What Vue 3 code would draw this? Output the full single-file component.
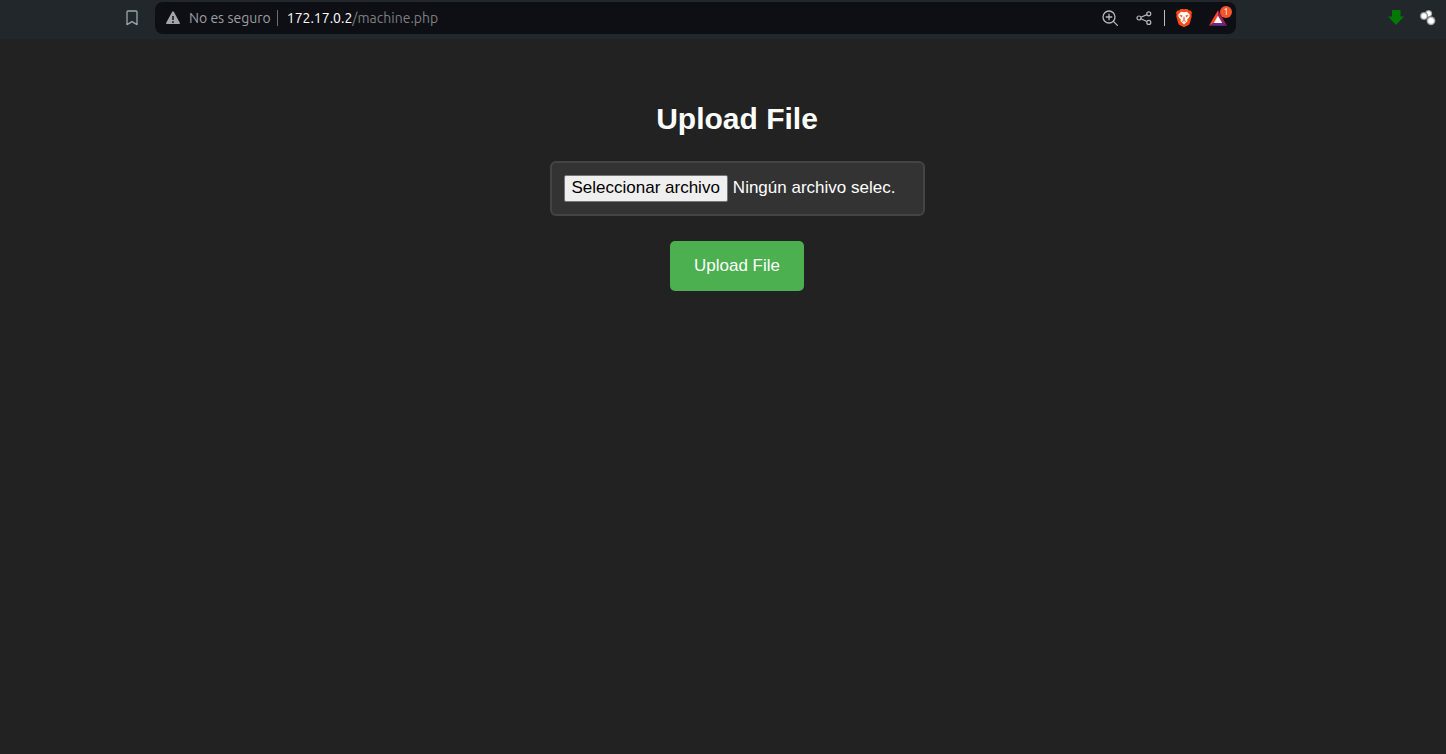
<script setup>
import { ref } from 'vue'

const fileName = ref('Ningún archivo selec.')

function onFile(event) {
  const file = event.target.files[0]
  fileName.value = file ? file.name : 'Ningún archivo selec.'
}
</script>

<template>
  <div class="window">
    <header class="toolbar">
      <button class="icon-btn bookmark" type="button" aria-label="Bookmark">
        <svg width="18" height="18" viewBox="0 0 18 18" fill="none" stroke="#9aa7ad" stroke-width="1.3" stroke-linejoin="round">
          <path d="M5 2h8q1 0 1 1v12.6L9 12.6 4 15.6V3q0-1 1-1Z" />
        </svg>
      </button>
      <div class="address">
        <button class="security" type="button">
          <svg width="16" height="16" viewBox="0 0 16 16">
            <path d="M8 2.2 14 13.2H2Z" fill="#a3a6aa" stroke="#a3a6aa" stroke-width="1.8" stroke-linejoin="round" />
            <path d="M8 6v4M8 11.3v1.6" stroke="#0e0f14" stroke-width="1.5" />
          </svg>
          <span>No es seguro</span>
        </button>
        <span class="divider"></span>
        <a class="url" href="#"><span class="host">172.17.0.2</span>/machine.php</a>
        <div class="actions">
          <button class="icon-btn" type="button" aria-label="Zoom">
            <svg width="18" height="18" viewBox="0 0 18 18" fill="none" stroke="#b6b8bc" stroke-width="1.3" stroke-linecap="round">
              <circle cx="8" cy="8" r="6" />
              <path d="m12.4 12.4 4 4M5.2 8h5.6M8 5.2v5.6" />
            </svg>
          </button>
          <button class="icon-btn" type="button" aria-label="Share">
            <svg width="18" height="18" viewBox="0 0 18 18" fill="none" stroke="#b6b8bc" stroke-width="1.2">
              <circle cx="4" cy="9" r="2" />
              <circle cx="13.8" cy="4.8" r="2" />
              <circle cx="13.8" cy="13.4" r="2" />
              <path d="m5.9 8.2 6-2.6M5.9 9.8l6 2.7" />
            </svg>
          </button>
          <span class="divider light"></span>
          <button class="icon-btn" type="button" aria-label="Brave Shields">
            <svg width="18" height="18" viewBox="0 0 18 18">
              <path d="M5.5 0h7L14 1.5h1.6L17 3.7l-.6 1.7.4 1.5-2 7.3q-.3 1-1.2 1.7L9 18.2l-4.6-2.3q-.9-.7-1.2-1.7l-2-7.3.4-1.5L1 3.7l1.4-2.2H4Z" fill="#fb4b10" />
              <path d="m6 2.7 3 .5 3-.5 2.8 3-.5 2.2-2.2 2.8.4 1.6L9 15.6l-3.5-3.3.4-1.6-2.2-2.8-.5-2.2Z" fill="#fff" />
              <path d="m4.4 5.9 3.2.7-1.2 1.8Zm9.2 0-3.2.7 1.2 1.8ZM9 6.8l.9 3.4-.9.7-.9-.7ZM6.6 12.2l2.4-1.1 2.4 1.1-.6.6L9 12.1l-1.8.7Z" fill="#fb4b10" />
            </svg>
          </button>
          <button class="icon-btn" type="button" aria-label="Brave Rewards">
            <svg width="18" height="18" viewBox="0 0 18 18">
              <path d="M9 1.2 0 16.8l5.3-3.1L9 7.4Z" fill="#ff4724" />
              <path d="M9 1.2v6.2l3.7 6.3 5.3 3.1Z" fill="#9e1f63" />
              <path d="m0 16.8 5.3-3.1h7.4l5.3 3.1Z" fill="#662d91" />
              <path d="m9 6.8 4.2 7.1H4.8Z" fill="#fff" />
            </svg>
            <span class="badge">1</span>
          </button>
        </div>
      </div>
      <div class="extensions">
        <button class="icon-btn" type="button" aria-label="Downloads">
          <svg width="18" height="18" viewBox="0 0 18 18">
            <path d="M5 2h8.5v6.5H17L9 17 1 8.500H5Z" fill="#047804" />
          </svg>
        </button>
        <button class="icon-btn" type="button" aria-label="Extension">
          <svg width="18" height="18" viewBox="0 0 18 18">
            <defs>
              <radialGradient id="ball">
                <stop offset="0.5" stop-color="#fff" />
                <stop offset="1" stop-color="#75787a" />
              </radialGradient>
            </defs>
            <circle cx="9.6" cy="5.6" r="3.6" fill="url(#ball)" />
            <circle cx="5" cy="8" r="4" fill="url(#ball)" />
            <circle cx="12" cy="12.800" r="4.500" fill="url(#ball)" />
          </svg>
        </button>
      </div>
    </header>

    <main class="page">
      <h1>Upload File</h1>
      <form @submit.prevent>
        <label class="picker">
          <input class="file" type="file" @change="onFile" />
          <span class="choose">Seleccionar archivo</span>
          <span class="name">{{ fileName }}</span>
        </label>
        <button class="submit" type="submit">Upload File</button>
      </form>
    </main>
  </div>
</template>

<style>
body {
  margin: 0;
  background: #222222;
}
</style>

<style scoped>
.window {
  min-height: 100vh;
  background: #222222;
  font-family: "Liberation Sans", Arial, sans-serif;
}

button {
  margin: 0;
  padding: 0;
  border: 0;
  background: none;
  font: inherit;
  color: inherit;
  cursor: pointer;
}

.toolbar {
  display: flex;
  align-items: flex-start;
  box-sizing: border-box;
  height: 39px;
  padding: 2px 9px 0 123px;
  background: #22272b;
  font-family: Ubuntu, "Noto Sans", sans-serif;
  font-size: 14px;
  line-height: 20px;
}

.icon-btn {
  display: flex;
  position: relative;
  width: 18px;
  height: 18px;
}

.bookmark {
  margin: 7px 14px 0 0;
}

.address {
  flex: 1;
  display: flex;
  align-items: center;
  box-sizing: border-box;
  min-width: 0;
  height: 32px;
  padding: 0 9px 0 10px;
  border-radius: 8px;
  background: #0e0f14;
  white-space: nowrap;
}

.security {
  display: flex;
  align-items: center;
  gap: 8px;
  color: #9b9ea3;
}

.divider {
  width: 1px;
  height: 16px;
  margin: 0 9px 0 6px;
  background: #6c6e73;
}

.divider.light {
  margin: 0 -6px 0 -5px;
  background: #bcbec2;
}

.url {
  color: #7c7e82;
  text-decoration: none;
}

.host {
  color: #ffffff;
}

.actions {
  display: flex;
  align-items: center;
  gap: 16px;
  margin-left: auto;
}

.badge {
  position: absolute;
  top: -3px;
  right: -5px;
  width: 12px;
  height: 12px;
  border-radius: 50%;
  background: #fb542b;
  color: #ffffff;
  font-size: 9px;
  line-height: 12px;
  text-align: center;
}

.extensions {
  display: flex;
  gap: 14px;
  margin: 6px 0 0 151px;
}

.page {
  display: flex;
  flex-direction: column;
  align-items: center;
  padding: 62px 0 0 28px;
}

h1 {
  margin: 0 0 24px;
  color: #ffffff;
  font-size: 30px;
  line-height: 36px;
}

form {
  display: flex;
  flex-direction: column;
  align-items: center;
  gap: 25px;
  color: #ffffff;
  font-size: 17px;
  line-height: 23px;
}

.picker {
  display: flex;
  align-items: flex-start;
  gap: 5px;
  box-sizing: border-box;
  width: 375px;
  max-width: 100%;
  padding: 12px;
  border: 2px solid #444444;
  border-radius: 6px;
  background: #333333;
  white-space: nowrap;
  cursor: pointer;
}

.file {
  position: absolute;
  width: 1px;
  height: 1px;
  opacity: 0;
}

.choose {
  padding: 0 7px 2px;
  border: 1px solid #767676;
  border-radius: 2px;
  background: #efefef;
  color: #000000;
}

.name {
  padding-top: 1px;
}

.submit {
  padding: 13px 24px 14px;
  border-radius: 5px;
  background: #4caf50;
}
</style>
